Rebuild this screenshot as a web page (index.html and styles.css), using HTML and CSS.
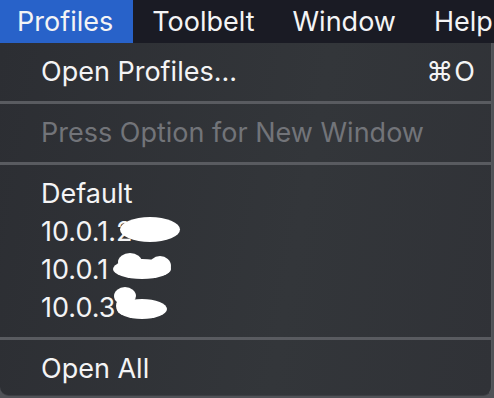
FILE: index.html
```html
<!DOCTYPE html>
<html lang="en">
<head>
    <meta charset="UTF-8">
    <meta name="viewport" content="width=device-width, initial-scale=1.0">
    <title>Profiles menu</title>
    <link rel="stylesheet" href="styles.css">
</head>
<body>
    <nav class="menu-bar">
        <div class="menu-title active">Profiles</div>
        <div class="menu-title">Toolbelt</div>
        <div class="menu-title">Window</div>
        <div class="menu-title">Help</div>
    </nav>

    <div class="dropdown">
        <div class="menu-item">
            <span>Open Profiles...</span>
            <span class="shortcut">⌘O</span>
        </div>

        <div class="separator"></div>

        <div class="menu-item disabled">Press Option for New Window</div>

        <div class="separator"></div>

        <div class="menu-item">Default</div>
        <div class="menu-item">
            <span>10.0.1.2</span>
            <!-- redacted -->
            <svg class="blob blob-one" width="62" height="27" viewBox="0 0 62 27">
                <ellipse cx="31" cy="13.5" rx="30" ry="12.5" fill="#fff"/>
            </svg>
        </div>
        <div class="menu-item">
            <span>10.0.1</span>
            <svg class="blob blob-two" width="62" height="28" viewBox="0 0 62 28">
                <ellipse cx="19" cy="10" rx="12" ry="9" fill="#fff"/>
                <ellipse cx="31" cy="17" rx="29" ry="10" fill="#fff"/>
                <ellipse cx="49" cy="14" rx="11" ry="10" fill="#fff"/>
            </svg>
        </div>
        <div class="menu-item">
            <span>10.0.3</span>
            <svg class="blob blob-three" width="56" height="33" viewBox="0 0 56 33">
                <ellipse cx="13" cy="9" rx="11" ry="9" fill="#fff"/>
                <ellipse cx="30" cy="22" rx="25" ry="10" fill="#fff"/>
                <ellipse cx="12" cy="19" rx="8" ry="9" fill="#fff"/>
            </svg>
        </div>

        <div class="separator"></div>

        <div class="menu-item">Open All</div>
    </div>
</body>
</html>
```

FILE: styles.css
```css
* {
    margin: 0;
    padding: 0;
    box-sizing: border-box;
}

body {
    font-family: Inter, "Noto Sans", sans-serif;
    font-size: 27px;
    width: 494px;
    height: 398px;
    background: #505257;
    color: #f4f4f5;
    overflow: hidden;
}

.menu-bar {
    height: 43px;
    display: flex;
    align-items: center;
    background: #1a1b24;
}

.menu-title {
    height: 100%;
    display: flex;
    align-items: center;
    padding: 0 19px;
}

.menu-title.active {
    background: #2862c9;
    padding-left: 17px;
    padding-right: 20px;
}

.dropdown {
    width: 492px;
    padding: 10px 0 7px;
    background: linear-gradient(100deg, #2c2e33 0%, #33363a 60%, #303237 100%);
    border-right: 1px solid #55575c;
    border-bottom: 1px solid #3c3e43;
    border-radius: 0 0 9px 9px;
}

.menu-item {
    position: relative;
    height: 38px;
    line-height: 38px;
    padding: 0 15px 0 41px;
    display: flex;
    justify-content: space-between;
    white-space: nowrap;
}

.menu-item.disabled {
    color: #727479;
}

.shortcut {
    letter-spacing: 1px;
}

.separator {
    height: 3px;
    margin: 10px 0;
    background: #595b60;
}

.blob {
    position: absolute;
}

.blob-one {
    left: 119px;
    top: 3px;
}

.blob-two {
    left: 111px;
    top: 1px;
}

.blob-three {
    left: 112px;
    top: -2px;
}
```
